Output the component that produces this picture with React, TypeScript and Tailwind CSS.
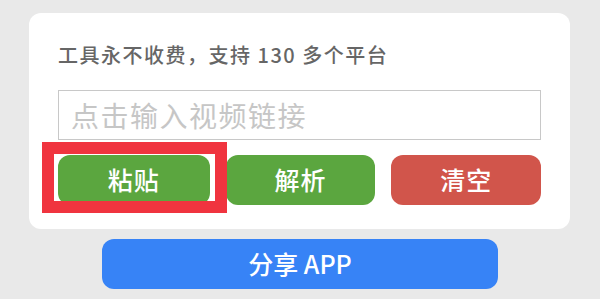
import React from "react";

export default function App() {
  const font = { fontFamily: '"Noto Sans CJK SC", "Noto Sans", sans-serif' };
  return (
    <div
      className="w-[600px] h-[299px] bg-[#e9e9e9] overflow-hidden flex flex-col items-start"
      style={font}
    >
      <div className="ml-[29px] mt-[13px] w-[541px] h-[216px] bg-white rounded-[12px] px-[29px] flex flex-col">
        <div className="mt-[32px] h-[20px] flex items-center text-[20px] leading-[20px] font-medium text-[#666666] tracking-[1.5px] whitespace-nowrap">
          工具永不收费，支持 130 多个平台
        </div>
        <div className="mt-[25px] h-[50px] border border-[#c8c8c8] flex items-center pl-[12px]">
          <input
            className="w-full h-full outline-none bg-transparent text-[28px] tracking-[1.5px] text-[#333] placeholder:text-[#c6c6c6]"
            placeholder="点击输入视频链接"
            style={font}
          />
        </div>
        <div className="relative mt-[15px] h-[50px] flex gap-[16px]">
          <button className="w-[152px] h-[50px] rounded-[12px] bg-[#5ba63f] text-white text-[25px] font-medium tracking-[1px] flex items-center justify-center">
            粘贴
          </button>
          <button className="w-[150px] h-[50px] rounded-[12px] bg-[#5ba63f] text-white text-[25px] font-medium tracking-[1px] flex items-center justify-center">
            解析
          </button>
          <button className="w-[150px] h-[50px] rounded-[12px] bg-[#d1554b] text-white text-[25px] font-medium tracking-[1px] flex items-center justify-center">
            清空
          </button>
          <div className="absolute left-[-16px] top-[-13px] w-[185px] h-[71px] border-[12px] border-[#f0343f] pointer-events-none" />
        </div>
      </div>
      <button className="ml-[102px] mt-[10px] w-[396px] h-[50px] rounded-[12px] bg-[#3783f6] text-white text-[25px] font-medium flex items-center justify-center">
        分享 APP
      </button>
    </div>
  );
}
